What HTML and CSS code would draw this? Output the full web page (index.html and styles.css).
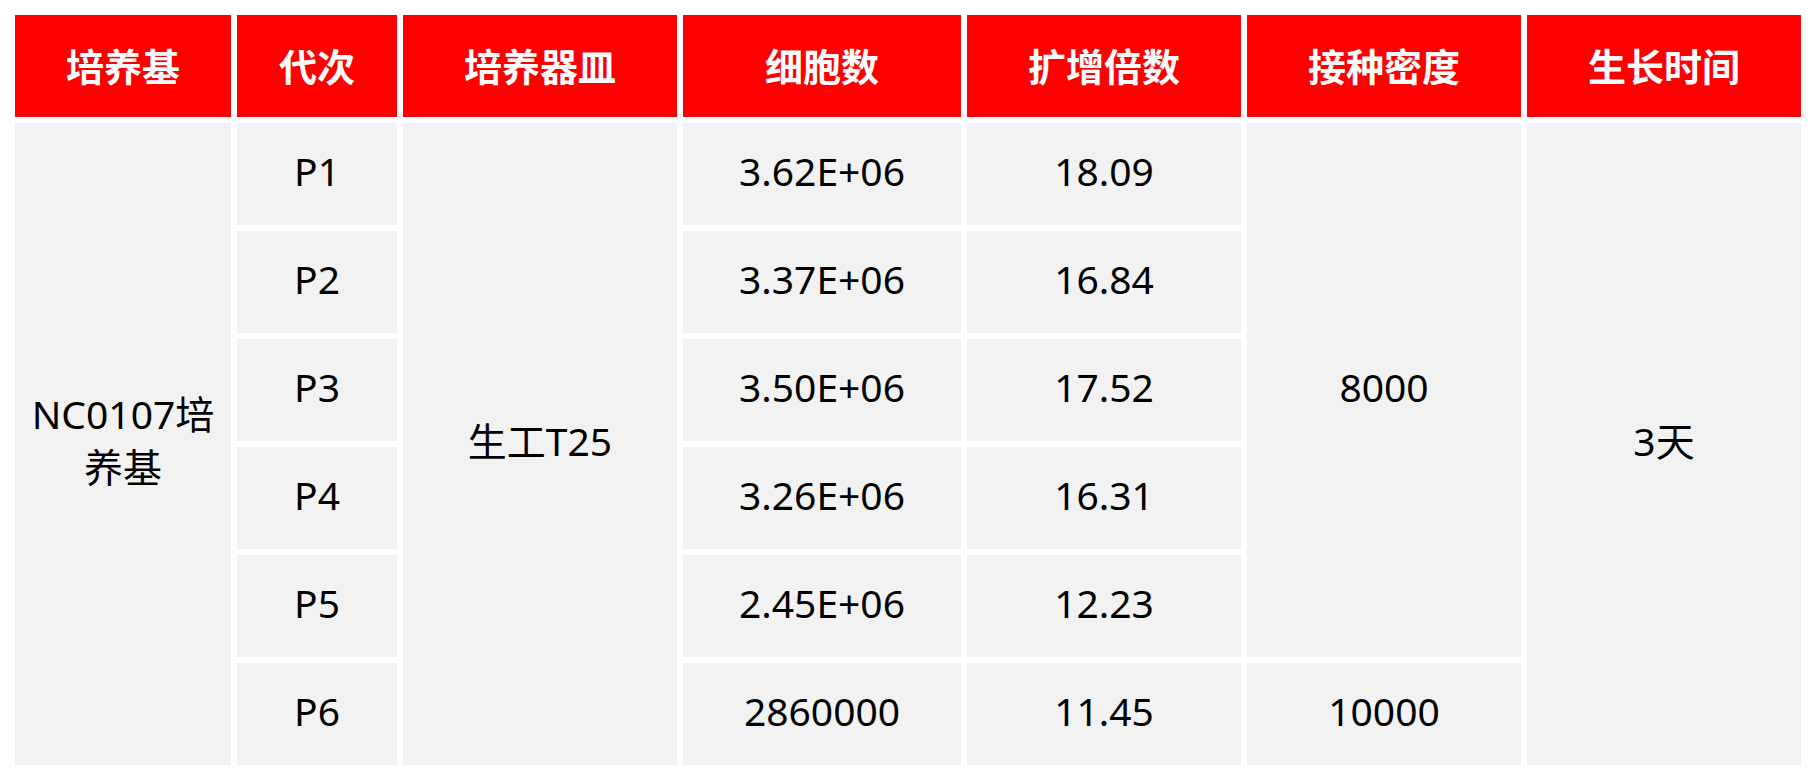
FILE: index.html
```html
<!DOCTYPE html>
<html lang="zh-CN">
<head>
<meta charset="utf-8">
<title>培养基</title>
<link rel="stylesheet" href="styles.css">
</head>
<body>
<div class="table">
  <div class="cell head">培养基</div>
  <div class="cell head">代次</div>
  <div class="cell head">培养器皿</div>
  <div class="cell head">细胞数</div>
  <div class="cell head">扩增倍数</div>
  <div class="cell head">接种密度</div>
  <div class="cell head">生长时间</div>

  <div class="cell medium">NC0107培养基</div>
  <div class="cell c2 r1">P1</div>
  <div class="cell dish">生工T25</div>
  <div class="cell c4 r1">3.62E+06</div>
  <div class="cell c5 r1">18.09</div>
  <div class="cell density">8000</div>
  <div class="cell time">3天</div>

  <div class="cell c2 r2">P2</div>
  <div class="cell c4 r2">3.37E+06</div>
  <div class="cell c5 r2">16.84</div>

  <div class="cell c2 r3">P3</div>
  <div class="cell c4 r3">3.50E+06</div>
  <div class="cell c5 r3">17.52</div>

  <div class="cell c2 r4">P4</div>
  <div class="cell c4 r4">3.26E+06</div>
  <div class="cell c5 r4">16.31</div>

  <div class="cell c2 r5">P5</div>
  <div class="cell c4 r5">2.45E+06</div>
  <div class="cell c5 r5">12.23</div>

  <div class="cell c2 r6">P6</div>
  <div class="cell c4 r6">2860000</div>
  <div class="cell c5 r6">11.45</div>
  <div class="cell c6 r6">10000</div>
</div>
</body>
</html>
```

FILE: styles.css
```css
html, body {
  margin: 0;
  padding: 0;
  background: #ffffff;
}

.table {
  display: grid;
  grid-template-columns: 216px 160px 274px 278px 274px 274px 274px;
  grid-template-rows: repeat(7, 102px);
  gap: 6px;
  padding: 15px;
  width: max-content;
  font-family: "Noto Sans", "Noto Sans CJK SC", sans-serif;
  font-size: 39px;
  color: #000000;
}

.cell {
  background: #f2f2f2;
  display: flex;
  align-items: center;
  justify-content: center;
  text-align: center;
  padding: 0 8px 6px;
  line-height: 1.35;
}

.head {
  background: #ff0000;
  color: #ffffff;
  font-family: "Noto Sans CJK SC", sans-serif;
  font-weight: 700;
  font-size: 38px;
  padding-bottom: 2px;
}

.medium { grid-column: 1; grid-row: 2 / span 6; }
.dish { grid-column: 3; grid-row: 2 / span 6; }
.density { grid-column: 6; grid-row: 2 / span 5; }
.time { grid-column: 7; grid-row: 2 / span 6; }

.c2 { grid-column: 2; }
.c4 { grid-column: 4; }
.c5 { grid-column: 5; }
.c6 { grid-column: 6; }

.r1 { grid-row: 2; }
.r2 { grid-row: 3; }
.r3 { grid-row: 4; }
.r4 { grid-row: 5; }
.r5 { grid-row: 6; }
.r6 { grid-row: 7; }
```
